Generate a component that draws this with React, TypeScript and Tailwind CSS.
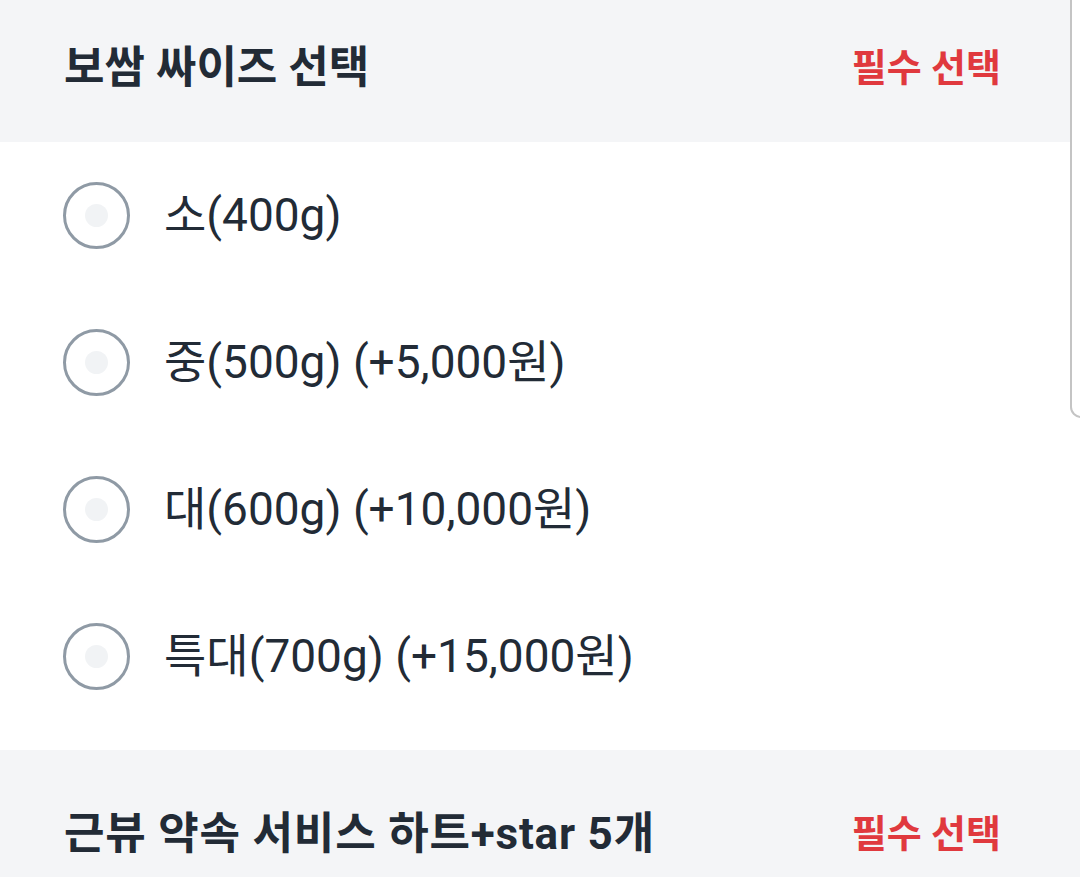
import { useState } from "react";

const OPTIONS = [
  "소(400g)",
  "중(500g) (+5,000원)",
  "대(600g) (+10,000원)",
  "특대(700g) (+15,000원)",
];

const FONT = "font-['Roboto','Noto_Sans_CJK_KR',sans-serif]";

function SectionHeader({ title, wide }: { title: string; wide?: boolean }) {
  return (
    <div className="flex h-[142px] items-center justify-between bg-[#f4f5f7] pb-[6px] pl-[64px] pr-[79px]">
      <h2 className={`text-[44px] font-bold text-[#222b36] ${wide ? "tracking-[0.8px]" : ""}`}>{title}</h2>
      <span className="text-[38px] font-bold text-[#e0393e]">필수 선택</span>
    </div>
  );
}

export default function App() {
  const [picked, setPicked] = useState<number | null>(null);

  return (
    <main className={`relative h-[877px] w-[1080px] overflow-hidden bg-white ${FONT}`}>
      <SectionHeader title="보쌈 싸이즈 선택" />

      <ul className="pb-[20px]">
        {OPTIONS.map((label, i) => (
          <li key={label}>
            <button
              type="button"
              onClick={() => setPicked(i)}
              className="flex h-[147px] w-full items-center gap-[34px] pl-[63px] text-left"
            >
              <span className="flex h-[67px] w-[67px] shrink-0 items-center justify-center rounded-full border-[3px] border-[#8f9aa5]">
                <span className={`h-[23px] w-[23px] rounded-full ${picked === i ? "bg-[#222b36]" : "bg-[#f1f3f5]"}`} />
              </span>
              <span className="text-[46px] text-[#222b36]">{label}</span>
            </button>
          </li>
        ))}
      </ul>

      <div className="bg-[#f4f5f7] pt-[16px]">
        <SectionHeader title="근뷰 약속 서비스 하트+star 5개" wide />
      </div>

      {/* overlay scroll handle on the right edge */}
      <div className="absolute right-[-12px] top-[-12px] h-[430px] w-[22px] rounded-[12px] border-2 border-[#c4c4c4] bg-white" />
    </main>
  );
}
